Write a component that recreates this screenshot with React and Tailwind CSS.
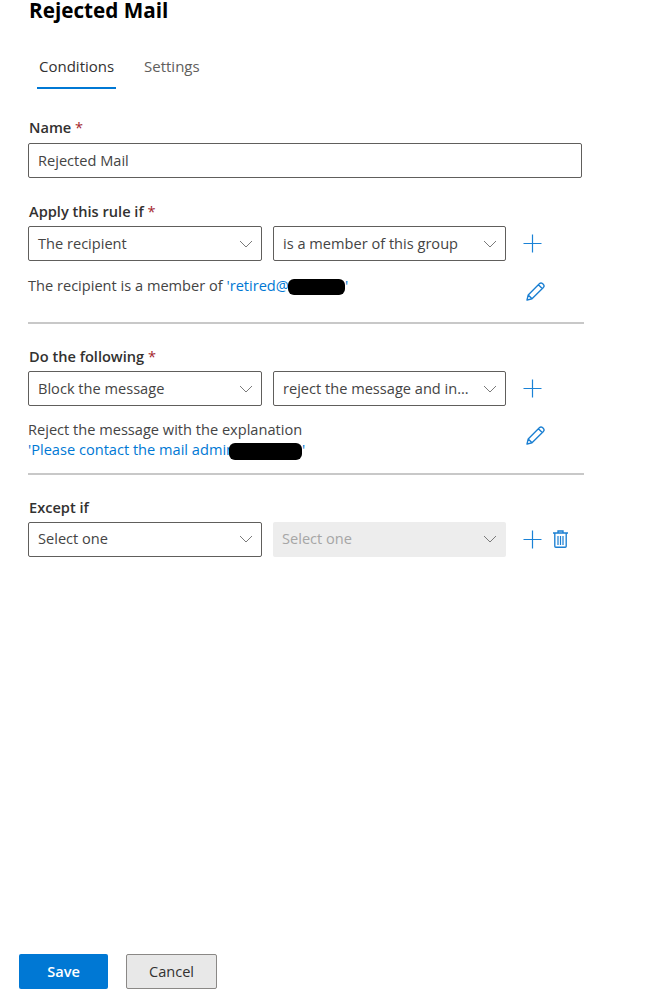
import React from "react";

const font = { fontFamily: '"Open Sans", "Noto Sans", sans-serif' };

function Chevron() {
  return (
    <svg width="14" height="8" viewBox="0 0 14 8" fill="none" className="shrink-0">
      <path d="M1 1l6 6 6-6" stroke="#7a7a7a" strokeWidth="1" />
    </svg>
  );
}

function Plus() {
  return (
    <svg width="19" height="19" viewBox="0 0 19 19" fill="none" className="shrink-0">
      <path d="M9.5 0.5v18M0.5 9.5h18" stroke="#1a82d6" strokeWidth="1.2" />
    </svg>
  );
}

function Pencil() {
  return (
    <svg width="19" height="19" viewBox="0 0 19 19" fill="none">
      <path
        d="M1 18l1.2-5L13.6 1.6c.8-.8 2-.8 2.9 0l.9.9c.8.8.8 2 0 2.9L6 16.8 1 18zM2.2 13l3.8 3.8M12.4 2.8l3.8 3.8"
        stroke="#1a7fd2"
        strokeWidth="1.35"
        strokeLinejoin="round"
      />
    </svg>
  );
}

function Trash() {
  return (
    <svg width="15" height="18" viewBox="0 0 15 18" fill="none" className="shrink-0">
      <path
        d="M0 3h15M5 3V1h5v2M1.8 3v13.2c0 .6.4 1 1 1h9.4c.6 0 1-.4 1-1V3"
        stroke="#1a7fd2"
        strokeWidth="1.35"
      />
      <path d="M5 6v9M7.5 6v9M10 6v9" stroke="#1a7fd2" strokeWidth="1.2" />
    </svg>
  );
}

function Label({ children, required }) {
  return (
    <div className="pl-px text-[14.6px] leading-[20px] font-semibold text-[#323130]">
      {children}
      {required && <span className="text-[#a4262c] font-normal"> *</span>}
    </div>
  );
}

function Select({ value, disabled, width }) {
  return (
    <div
      className={
        (width === "right" ? "w-[233px] " : "w-[234px] ") +
        (disabled
          ? "h-[35px] rounded-[2px] bg-[#ededed] flex items-center justify-between pl-[9px] pr-[9px] text-[14.6px] text-[#a6a6a6]"
          : "h-[35px] rounded-[2px] border border-[#605e5c] bg-white flex items-center justify-between pl-[9px] pr-[8px] text-[14.6px] text-[#444444]")
      }
    >
      <span className="whitespace-nowrap">{value}</span>
      <Chevron />
    </div>
  );
}

function SelectRow({ left, right, disabledRight, trash }) {
  return (
    <div className="flex items-center mt-[5px] h-[35px]">
      <Select value={left} />
      <div className="w-[11px]" />
      <Select value={right} disabled={disabledRight} width="right" />
      <div className="ml-[17px] flex items-center gap-[11px]">
        <Plus />
        {trash && <Trash />}
      </div>
    </div>
  );
}

function Blob({ w, h, m }) {
  return <span className={`inline-block align-middle bg-black rounded-[6px] ${w} ${h} ${m}`} />;
}

export default function App() {
  return (
    <div style={font} className="relative w-[645px] h-[999px] bg-white overflow-hidden flex flex-col">
      <div className="pl-[29px] h-[21px]">
        <h1 className="text-[20.7px] leading-[21px] font-bold text-black whitespace-nowrap">Rejected Mail</h1>
      </div>

      <div className="flex mt-[33px] ml-[37px] h-[35px] text-[15px] leading-[24px]">
        <div className="w-[79px] h-[35px] pl-[2px] border-b-2 border-[#0078d4] text-[#323130]">Conditions</div>
        <div className="ml-[28px] text-[#605e5c]">Settings</div>
      </div>

      <div className="ml-[28px] mr-[61px] flex flex-col">
        <div className="mt-[28px]">
          <Label required>Name</Label>
        </div>
        <div className="mt-[6px] w-[554px] h-[35px] rounded-[2px] border border-[#605e5c] flex items-center pl-[9px] text-[14.6px] text-[#444444]">
          Rejected Mail
        </div>

        <div className="mt-[23px]">
          <Label required>Apply this rule if</Label>
        </div>
        <SelectRow left="The recipient" right="is a member of this group" />
        <div className="mt-[14px] flex justify-between w-[556px] text-[14.6px] leading-[20px] text-[#444444]">
          <div className="whitespace-nowrap">
            The recipient is a member of{" "}
            <span className="text-[#0078d4]">
              'retired@
              <Blob w="w-[57px]" h="h-[16px]" m="ml-[-1px]" />'
            </span>
          </div>
          <div className="mr-[39px] mt-[7px]">
            <Pencil />
          </div>
        </div>
        <div className="mt-[21px] w-[556px] h-[2px] bg-[#c8c8c8]" />

        <div className="mt-[22px]">
          <Label required>Do the following</Label>
        </div>
        <SelectRow left="Block the message" right="reject the message and in..." />
        <div className="mt-[13px] flex justify-between w-[556px] text-[14.6px] leading-[20px] text-[#444444]">
          <div className="whitespace-nowrap">
            <div>Reject the message with the explanation</div>
            <div className="text-[#0078d4]">
              'Please contact the mail admin
              <Blob w="w-[73px]" h="h-[17px]" m="ml-[-6px]" />'
            </div>
          </div>
          <div className="mr-[39px] mt-[7px]">
            <Pencil />
          </div>
        </div>
        <div className="mt-[13px] w-[556px] h-[2px] bg-[#c8c8c8]" />

        <div className="mt-[22px]">
          <Label>Except if</Label>
        </div>
        <SelectRow left="Select one" right="Select one" disabledRight trash />
      </div>

      <div className="mt-auto mb-[10px] ml-[19px] flex gap-[18px]">
        <div className="w-[89px] h-[35px] rounded-[2px] bg-[#0078d4] flex items-center justify-center text-[14.6px] font-semibold text-white">
          Save
        </div>
        <div className="w-[91px] h-[35px] rounded-[2px] border border-[#8a8886] bg-[#e8e8e8] flex items-center justify-center text-[14.6px] font-medium text-[#323130]">
          Cancel
        </div>
      </div>
    </div>
  );
}
